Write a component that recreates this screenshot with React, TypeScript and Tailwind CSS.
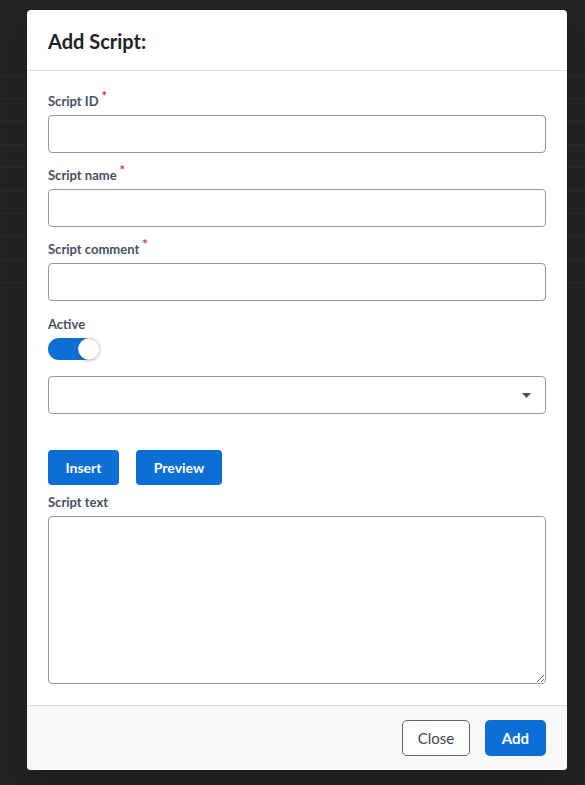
import React, { useState } from 'react';

const Label: React.FC<{ text: string; required?: boolean }> = ({ text, required }) => (
  <label className="flex items-start text-[13px] font-bold text-[#475161] leading-[18px] mb-[5px]">
    {text}
    {required && <span className="text-[#d0312d] text-[13px] leading-[10px] ml-[3px] mt-[-1px]">*</span>}
  </label>
);

const TextField: React.FC<{ label: string; required?: boolean }> = ({ label, required }) => (
  <div className="flex flex-col">
    <Label text={label} required={required} />
    <input className="h-[38px] w-full rounded-[4px] border border-[#8f98a3] bg-white px-3 text-[14px] outline-none" />
  </div>
);

const App: React.FC = () => {
  const [active, setActive] = useState(true);
  const rows = Array.from({ length: 10 });

  return (
    <div className="relative h-[785px] w-[585px] overflow-hidden bg-[#232323] font-['Lato','Noto_Sans',sans-serif]">
      {/* table rows behind the overlay */}
      <div className="flex flex-col pt-[53px]">
        {rows.map((_, i) => (
          <div key={i} className="h-[23px] border-b border-[#2a2a2a]" />
        ))}
      </div>

      <div className="absolute left-[27px] top-[10px] flex h-[760px] w-[540px] flex-col overflow-hidden rounded-[4px] bg-white shadow-xl">
        <div className="flex h-[61px] items-center border-b border-[#dcdfe3] px-[21px] pt-[2px]">
          <h1 className="text-[20px] font-bold text-[#1f2328]">Add Script:</h1>
        </div>

        <div className="flex flex-1 flex-col px-[21px] pt-[21px]">
          <div className="flex flex-col gap-[13px]">
            <TextField label="Script ID" required />
            <TextField label="Script name" required />
            <TextField label="Script comment" required />
          </div>

          <div className="mt-[14px] flex flex-col">
            <Label text="Active" />
            <button
              onClick={() => setActive(!active)}
              className={`relative h-[22px] w-[51px] rounded-full ${active ? 'bg-[#0c6fd6]' : 'bg-[#c5cad1]'}`}
            >
              <span
                className={`absolute top-0 h-[22px] w-[22px] rounded-full border border-[#e2e4e7] bg-white shadow-[0_1px_3px_rgba(0,0,0,0.25)] ${active ? 'right-[-1px]' : 'left-0'}`}
              />
            </button>
          </div>

          <div className="mt-[16px] flex h-[38px] w-full items-center justify-end rounded-[4px] border border-[#8f98a3] bg-white pr-[14px]">
            <svg width="9" height="5" viewBox="0 0 9 5">
              <path d="M0 0h9L4.5 5z" fill="#4a4f55" />
            </svg>
          </div>

          <div className="mt-[36px] flex gap-[17px]">
            <button className="h-[35px] w-[71px] rounded-[4px] bg-[#0c6fd6] text-[14px] font-bold text-white">Insert</button>
            <button className="h-[35px] w-[86px] rounded-[4px] bg-[#0c6fd6] text-[14px] font-bold text-white">Preview</button>
          </div>

          <div className="mt-[8px] flex flex-col">
            <Label text="Script text" />
            <textarea className="h-[168px] w-full resize-y rounded-[4px] border border-[#8f98a3] bg-white px-3 py-2 text-[14px] outline-none" />
          </div>
        </div>

        <div className="flex h-[65px] items-center justify-end gap-[15px] border-t border-[#d8dbe0] bg-[#f7f8fa] px-[21px]">
          <button className="h-[36px] w-[68px] rounded-[5px] border border-[#5b6573] bg-white text-[15px] text-[#3d4753]">Close</button>
          <button className="h-[36px] w-[61px] rounded-[5px] bg-[#0c6fd6] text-[15px] font-bold text-white">Add</button>
        </div>
      </div>
    </div>
  );
};

export default App;
